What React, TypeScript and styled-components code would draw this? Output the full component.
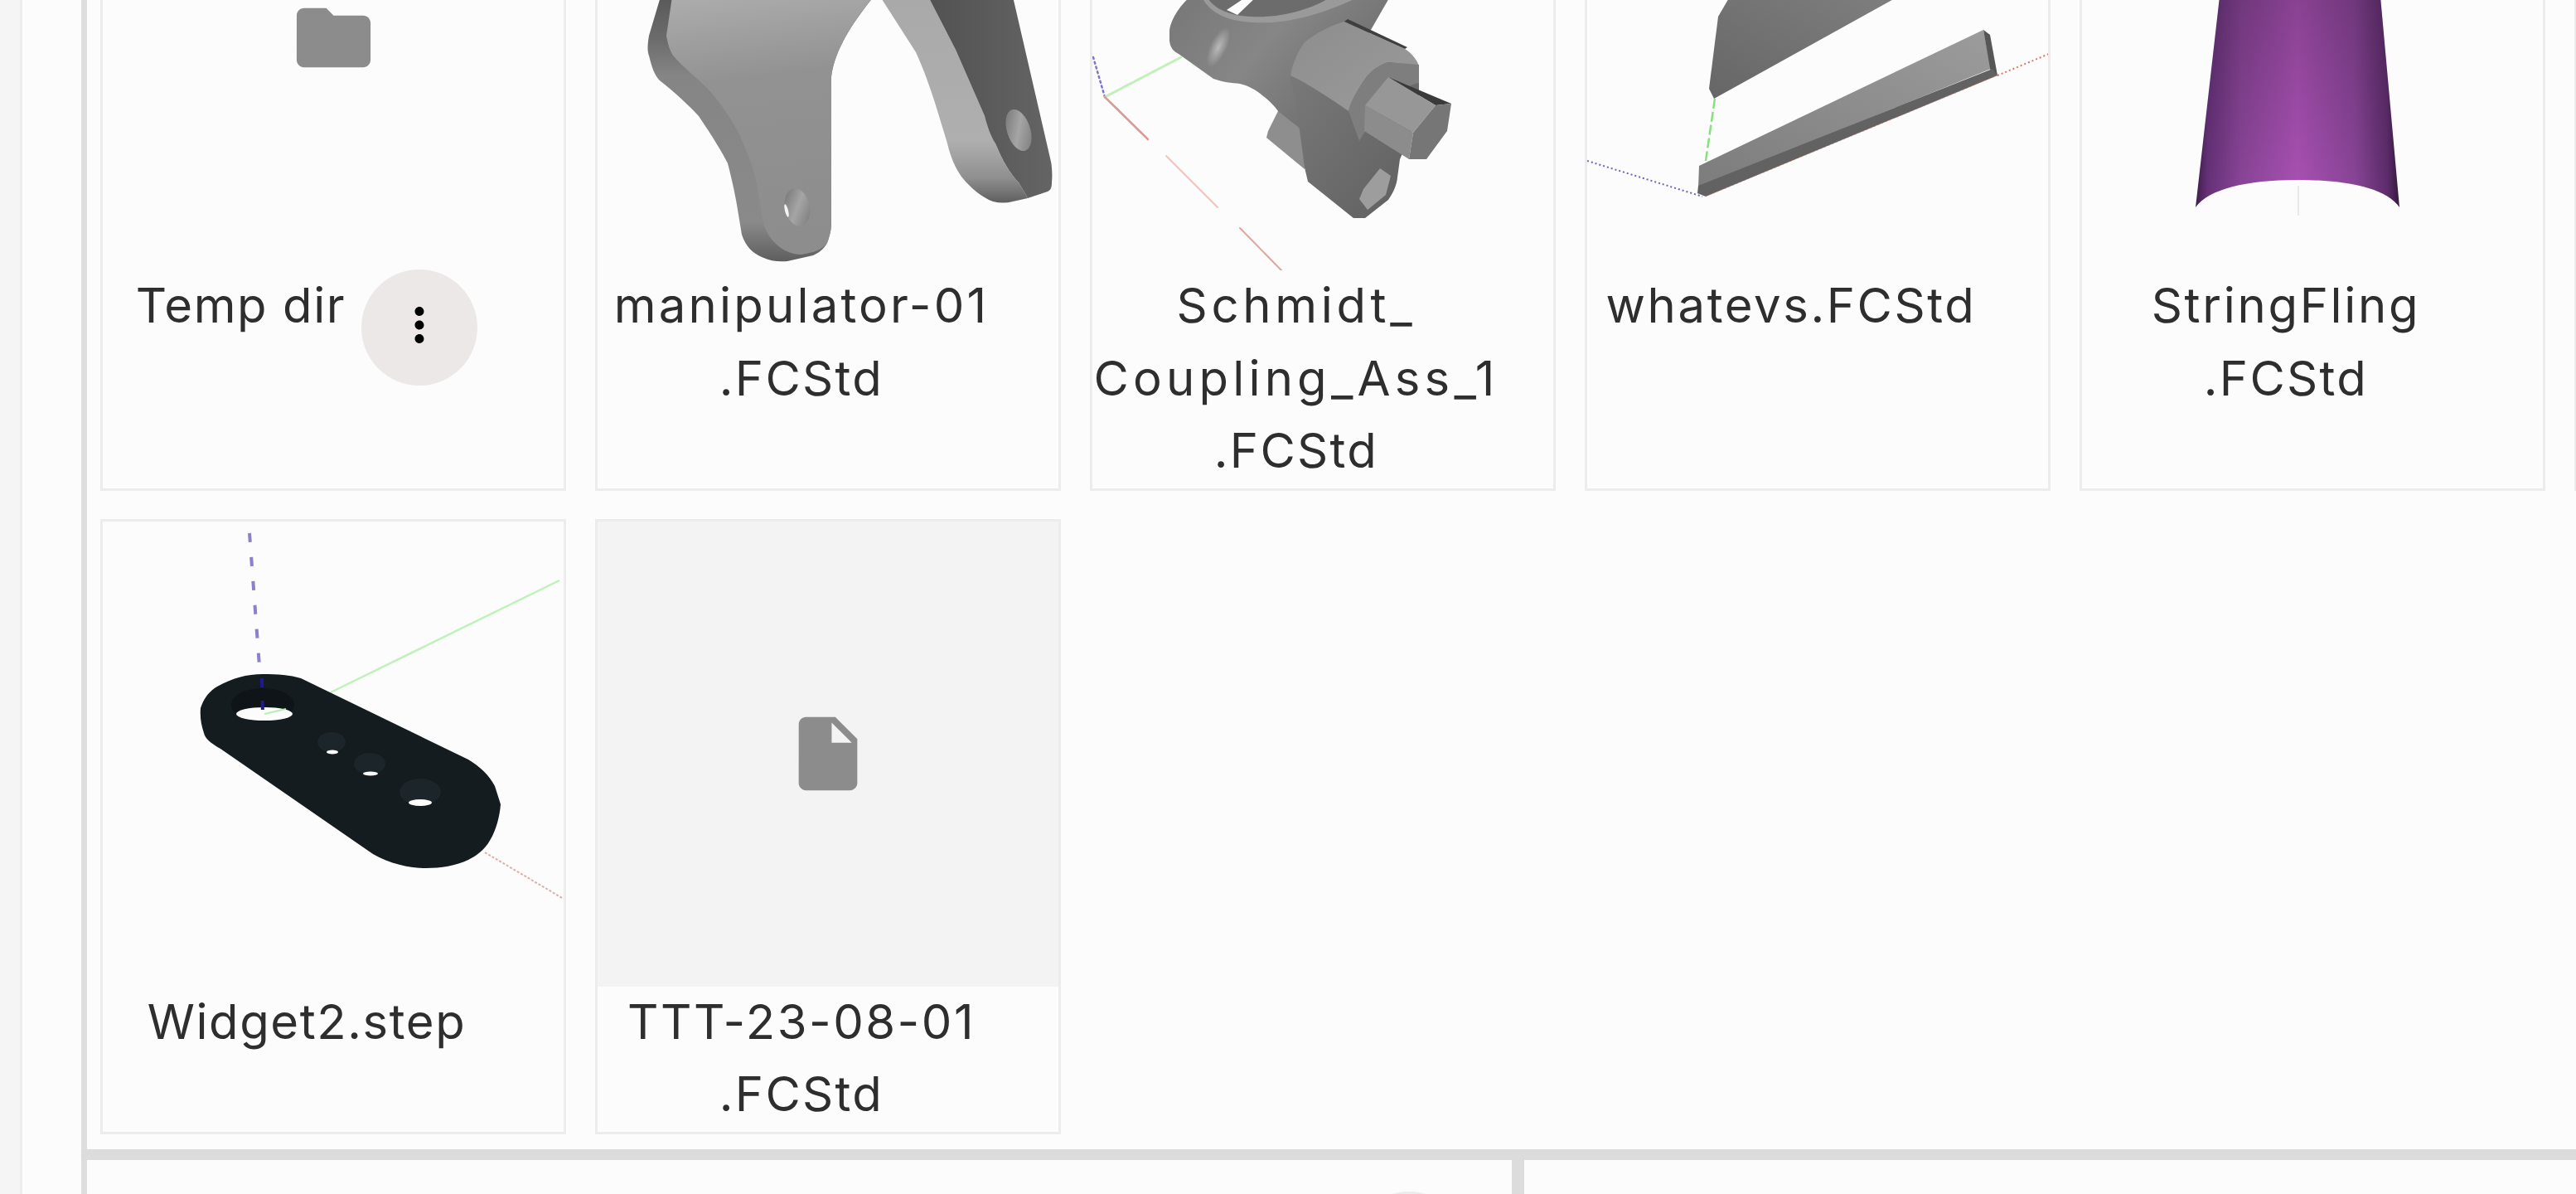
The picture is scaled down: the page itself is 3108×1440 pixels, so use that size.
import React from 'react'
import styled, { createGlobalStyle } from 'styled-components'
import { MdFolder, MdInsertDriveFile, MdMoreVert } from 'react-icons/md'

const GlobalStyle = createGlobalStyle`
  html, body {
    margin: 0;
    padding: 0;
    background: #fcfcfc;
    font-family: Inter, "Noto Sans", sans-serif;
  }
`

const Page = styled.div`
  display: flex;
  width: 3108px;
  height: 1440px;
  overflow: hidden;
  background: #fcfcfc;
`

const EdgeRail = styled.div`
  flex: 0 0 24px;
  background: #f5f5f5;
  border-right: 3px solid #ececec;
`

const SideColumn = styled.div`
  flex: 0 0 71px;
  border-right: 7px solid #dedede;
`

const MainColumn = styled.div`
  flex: 1;
  min-width: 0;
  display: flex;
  flex-direction: column;
`

const BrowserPanel = styled.div`
  flex: 1;
  min-height: 0;
  overflow: hidden;
  padding-left: 16px;
`

const CardGrid = styled.div`
  display: grid;
  grid-template-columns: repeat(6, 562px);
  column-gap: 35px;
  row-gap: 34px;
  margin-top: -238px;
`

const Card = styled.div`
  box-sizing: border-box;
  border: 3px solid #ececec;
  background: #fcfcfc;
`

const Thumb = styled.div<{ $placeholder?: boolean }>`
  height: 561px;
  display: flex;
  align-items: center;
  justify-content: center;
  color: #8c8c8c;
  background: ${p => (p.$placeholder ? '#f3f3f3' : 'transparent')};
  svg {
    display: block;
  }
`

const RenderSvg = styled.svg`
  filter: blur(0.7px);
`

const LabelRow = styled.div`
  display: flex;
  justify-content: center;
  align-items: flex-start;
  gap: 19px;
  padding: 0 64px 1px 0;
  margin-top: -1px;
`

const Label = styled.div`
  color: #2e2e2e;
  font-size: 58px;
  line-height: 87.5px;
  text-align: center;
`

const LabelLine = styled.span<{ $tracking: number }>`
  display: block;
  white-space: nowrap;
  letter-spacing: ${p => p.$tracking}px;
`

const MenuButton = styled.div`
  flex: 0 0 140px;
  height: 140px;
  box-sizing: border-box;
  padding-bottom: 6px;
  border-radius: 50%;
  background: #ece8e8;
  color: #000;
  display: flex;
  align-items: center;
  justify-content: center;
`

const HorizontalDivider = styled.div`
  flex: 0 0 13px;
  margin-left: -7px;
  background: #dcdcdc;
`

const BottomRow = styled.div`
  flex: 0 0 41px;
  display: flex;
  overflow: hidden;
`

const BottomLeft = styled.div`
  flex: 0 0 1734px;
  display: flex;
  justify-content: flex-end;
  padding: 38px 54px 0 0;
  box-sizing: border-box;
  border-right: 15px solid #dcdcdc;
`

const RoundAction = styled.div`
  flex: 0 0 140px;
  height: 140px;
  border-radius: 50%;
  background: #ececec;
`

const BottomRight = styled.div`
  flex: 1;
`

/* the renders below use screen coordinates as viewBox, per card */
const Render = ({ x, y, children }: { x: number; y: number; children: React.ReactNode }) => (
  <RenderSvg width="556" height="561" viewBox={`${x + 3} ${y + 3} 556 561`}>
    {children}
  </RenderSvg>
)

const ManipulatorRender = () => (
  <Render x={718} y={-238}>
    <defs>
      <linearGradient id="manFace" x1="0" y1="0" x2="0.1" y2="1">
        <stop offset="0" stopColor="#adadad" />
        <stop offset="0.35" stopColor="#929292" />
        <stop offset="1" stopColor="#8d8d8d" />
      </linearGradient>
      <linearGradient id="manEdge" x1="0" y1="0" x2="0" y2="1">
        <stop offset="0" stopColor="#595959" />
        <stop offset="0.16" stopColor="#6c6c6c" />
        <stop offset="0.3" stopColor="#858585" />
        <stop offset="0.85" stopColor="#8a8a8a" />
        <stop offset="1" stopColor="#5e5e5e" />
      </linearGradient>
      <linearGradient id="manLight" x1="0" y1="0" x2="0" y2="1">
        <stop offset="0" stopColor="#a9a9a9" />
        <stop offset="0.7" stopColor="#afafaf" />
        <stop offset="0.88" stopColor="#8f8f8f" />
        <stop offset="1" stopColor="#5f5f5f" />
      </linearGradient>
      <linearGradient id="manDark" x1="0" y1="0" x2="1" y2="0">
        <stop offset="0" stopColor="#525252" />
        <stop offset="1" stopColor="#646464" />
      </linearGradient>
      <linearGradient id="holeShade" x1="0" y1="0" x2="1" y2="1">
        <stop offset="0" stopColor="#6f6f6f" />
        <stop offset="0.5" stopColor="#a5a5a5" />
        <stop offset="1" stopColor="#777" />
      </linearGradient>
    </defs>
    <path
      d="M797 -4 L783 43 C781 55 781 62 783 67 C786 80 790 92 797 98 C815 112 832 128 843 140 C860 165 872 185 878 197 C884 220 888 240 890 253 L895 283 C900 298 908 305 919 310 C930 315 940 316 950 315 L981 308 C992 303 998 296 1000 287 C1003 278 1003 272 1003 267 L1003 93 C1006 62 1028 28 1054 -4 Z"
      fill="url(#manEdge)"
    />
    <path
      d="M811 -4 L804 43 C806 55 809 62 812 67 C825 82 842 95 854 107 C870 125 882 143 891 160 C900 180 908 200 912 217 L922 273 C928 288 938 297 947 302 C955 306 962 307 967 307 L981 304 C992 300 998 296 1000 287 C1003 278 1003 272 1003 267 L1003 93 C1006 62 1028 28 1054 -4 Z"
      fill="url(#manFace)"
    />
    <ellipse cx="962" cy="250" rx="15" ry="23" transform="rotate(-12 962 250)" fill="url(#holeShade)" />
    <ellipse cx="949" cy="254" rx="2" ry="8" transform="rotate(-14 949 254)" fill="#f4f4f4" />
    <path
      d="M1062 -4 L1105 63 C1115 85 1122 105 1129 127 L1143 173 C1147 190 1153 203 1160 213 C1172 228 1185 238 1198 243 C1206 245 1214 245 1222 243 L1240 239 L1229 220 C1215 205 1208 190 1201 173 L1188 140 L1153 60 L1120 -4 Z"
      fill="url(#manLight)"
    />
    <path
      d="M1120 -4 L1153 60 L1188 140 C1192 155 1196 165 1201 173 C1210 195 1218 208 1229 220 L1240 239 L1264 231 C1268 229 1269 226 1269 220 C1270 210 1269 200 1268 195 L1222 -4 Z"
      fill="url(#manDark)"
    />
    <ellipse cx="1229" cy="157" rx="14" ry="26" transform="rotate(-18 1229 157)" fill="url(#holeShade)" />
  </Render>
)

const CouplingRender = () => (
  <Render x={1315} y={-238}>
    <defs>
      <linearGradient id="cplArm" x1="0" y1="0" x2="1" y2="0.6">
        <stop offset="0" stopColor="#777" />
        <stop offset="0.45" stopColor="#868686" />
        <stop offset="1" stopColor="#6a6a6a" />
      </linearGradient>
      <linearGradient id="cplBody" x1="0" y1="0" x2="1" y2="1">
        <stop offset="0" stopColor="#7b7b7b" />
        <stop offset="1" stopColor="#5f5f5f" />
      </linearGradient>
      <linearGradient id="cplHead" x1="0" y1="0" x2="1" y2="1">
        <stop offset="0" stopColor="#8d8d8d" />
        <stop offset="1" stopColor="#9b9b9b" />
      </linearGradient>
      <radialGradient id="cplShine">
        <stop offset="0" stopColor="#b9b9b9" />
        <stop offset="1" stopColor="#b9b9b9" stopOpacity="0" />
      </radialGradient>
    </defs>
    <g fill="none" strokeLinecap="round">
      <path d="M1319 69 L1333 117" stroke="#7d75c8" strokeWidth="2.5" strokeDasharray="2 4" />
      <path d="M1333 117 L1425 69" stroke="#c3efbb" strokeWidth="3" strokeDasharray="4 1" />
      <path d="M1333 117 L1385 168" stroke="#d69d94" strokeWidth="2.5" />
      <path d="M1407 188 L1469 250" stroke="#ecc5be" strokeWidth="2" />
      <path d="M1496 275 L1547 327" stroke="#dfa69e" strokeWidth="2" />
    </g>
    {/* rear lug */}
    <path d="M1542 134 L1530 158 L1528 166 L1574 204 L1580 140 Z" fill="#8e8e8e" />
    {/* arm and ring */}
    <path
      d="M1436 -4 C1420 10 1411 28 1411 38 L1411 49 C1412 58 1416 62 1422 65 L1464 95 C1475 99 1486 100 1496 101 C1508 104 1516 109 1523 115 C1532 122 1538 128 1542 134 L1600 180 L1640 60 L1654 36 L1677 -4 Z"
      fill="url(#cplArm)"
    />
    <ellipse cx="1470" cy="57" rx="10" ry="26" transform="rotate(25 1470 57)" fill="url(#cplShine)" />
    <path d="M1450 -4 C1458 14 1478 25 1510 27 C1550 30 1595 18 1640 -4 Z" fill="#9a9a9a" />
    <path d="M1456 -4 C1464 10 1482 19 1510 20 C1548 22 1585 10 1606 -4 Z" fill="#6c6c6c" />
    <path d="M1480 12 L1504 -4 L1516 -4 L1493 18 Z" fill="#fcfcfc" />
    {/* lower body */}
    <path
      d="M1556 90 C1560 110 1566 130 1567 150 L1574 202 L1578 219 L1633 263 L1647 263 L1675 241 C1681 232 1685 224 1686 214 L1689 192 L1712 140 L1712 85 L1640 60 Z"
      fill="url(#cplBody)"
    />
    {/* boss */}
    <path
      d="M1557 91 C1560 75 1566 62 1574 51 C1588 40 1604 31 1622 26 L1695 59 C1703 64 1710 72 1712 80 L1675 75 C1660 80 1652 88 1647 95 C1638 108 1630 122 1627 134 C1604 118 1580 102 1557 91 Z"
      fill="url(#cplHead)"
    />
    <path d="M1622 26 L1695 59 L1698 57 L1626 23 Z" fill="#3f3f3f" />
    <path d="M1627 134 C1630 122 1638 108 1647 95 C1655 85 1664 78 1675 75 L1712 78 L1712 100 C1690 105 1665 125 1655 145 L1640 170 Z" fill="#7e7e7e" />
    {/* hex shaft */}
    <path d="M1675 93 L1751 125 L1732 127 Z" fill="#3a3a3a" />
    <path d="M1647 127 L1675 93 L1732 127 L1705 160 Z" fill="#979797" />
    <path d="M1647 127 L1705 160 L1700 192 L1646 158 Z" fill="#8c8c8c" />
    <path d="M1732 127 L1751 125 L1746 158 L1721 192 L1700 192 L1705 160 Z" fill="#767676" />
    {/* hex socket */}
    <path d="M1640 240 L1645 228 L1665 203 L1678 212 L1672 235 L1650 253 Z" fill="#9d9d9d" />
  </Render>
)

const WhatevsRender = () => (
  <Render x={1912} y={-238}>
    <defs>
      <linearGradient id="wSlabTop" x1="0" y1="1" x2="1" y2="0">
        <stop offset="0" stopColor="#666" />
        <stop offset="1" stopColor="#7f7f7f" />
      </linearGradient>
      <linearGradient id="wSlabLow" x1="0" y1="1" x2="1" y2="0">
        <stop offset="0" stopColor="#7c7c7c" />
        <stop offset="1" stopColor="#9c9c9c" />
      </linearGradient>
    </defs>
    <path d="M2069 119 L2058 194" fill="none" stroke="#86e07f" strokeWidth="2.5" strokeDasharray="12 4" />
    <path d="M2086 -4 L2086 6" fill="none" stroke="#86e07f" strokeWidth="2.5" />
    <path d="M1915 194 L2054 237" fill="none" stroke="#6d63bb" strokeWidth="2" strokeDasharray="2 3" />
    <path d="M2410 91 L2472 65" fill="none" stroke="#d8776a" strokeWidth="2" strokeDasharray="2 3" />
    <path d="M2087 -4 L2073 20 L2062 107 L2068 119 L2290 -4 Z" fill="url(#wSlabTop)" />
    <path d="M2050 200 L2393 36 L2402 83 L2049 226 Z" fill="url(#wSlabLow)" />
    <path d="M2393 36 L2401 42 L2410 91 L2402 88 Z" fill="#565656" />
    <path d="M2049 224 L2404 83 L2410 91 L2058 237 L2048 233 Z" fill="#626262" />
    <path d="M2058 237 L2410 91" fill="none" stroke="#d8776a" strokeWidth="1" strokeDasharray="2 3" opacity="0.7" />
  </Render>
)

const StringFlingRender = () => (
  <Render x={2509} y={-238}>
    <defs>
      <linearGradient id="sfWall" x1="0" y1="0" x2="1" y2="0">
        <stop offset="0" stopColor="#3f1d4a" />
        <stop offset="0.06" stopColor="#67327a" />
        <stop offset="0.22" stopColor="#8b4599" />
        <stop offset="0.5" stopColor="#ab52b6" />
        <stop offset="0.78" stopColor="#8b4599" />
        <stop offset="0.94" stopColor="#5e2d6d" />
        <stop offset="1" stopColor="#341840" />
      </linearGradient>
      <linearGradient id="sfFade" x1="0" y1="0" x2="0" y2="1">
        <stop offset="0" stopColor="#000" stopOpacity="0.2" />
        <stop offset="1" stopColor="#000" stopOpacity="0" />
      </linearGradient>
    </defs>
    <path d="M2678 -4 L2649 250 C2665 228 2710 217 2772 217 C2835 217 2880 228 2895 250 L2872 -4 Z" fill="url(#sfWall)" />
    <path d="M2678 -4 L2649 250 C2665 228 2710 217 2772 217 C2835 217 2880 228 2895 250 L2872 -4 Z" fill="url(#sfFade)" />
    <path d="M2773 224 L2773 260" stroke="#e8e8e8" strokeWidth="2" fill="none" />
  </Render>
)

const WidgetRender = () => (
  <Render x={121} y={626}>
    <g fill="none">
      <path d="M301 643 L317 857" stroke="#8a80cc" strokeWidth="4" strokeDasharray="11 18" />
      <path d="M399 835 L675 700" stroke="#bdf2b8" strokeWidth="2.5" />
      <path d="M585 1028 L680 1084" stroke="#dcb0a8" strokeWidth="2" strokeDasharray="3 2" />
    </g>
    <path
      d="M242 854 C246 842 252 834 262 828 C280 818 298 813 317 813 C335 813 350 814 363 818 L565 916 C580 925 590 935 597 948 L604 970 C603 985 598 1002 592 1012 C585 1025 575 1032 565 1037 C550 1044 532 1047 514 1047 C495 1047 470 1042 450 1030 L266 903 C256 897 248 892 246 884 C243 875 241 865 242 854 Z"
      fill="#151c20"
    />
    <ellipse cx="317" cy="850" rx="38" ry="20" fill="#0e1417" />
    <ellipse cx="319" cy="861" rx="34" ry="8" fill="#fcfcfc" />
    <path d="M319 861 L345 855" stroke="#b5f0b0" strokeWidth="2" fill="none" />
    <path d="M316 818 L317 862" stroke="#1f1a90" strokeWidth="4" strokeDasharray="11 16" fill="none" />
    <ellipse cx="400" cy="895" rx="17" ry="12" fill="#1c2529" />
    <ellipse cx="401" cy="907" rx="7" ry="2.5" fill="#fcfcfc" />
    <ellipse cx="446" cy="921" rx="19" ry="13" fill="#1c2529" />
    <ellipse cx="447" cy="933" rx="9" ry="2.5" fill="#fcfcfc" />
    <ellipse cx="507" cy="955" rx="25" ry="16" fill="#1c2529" />
    <ellipse cx="507" cy="968" rx="14" ry="4" fill="#fcfcfc" />
  </Render>
)

type Item = {
  lines: [string, number][]
  render?: React.ReactNode
  icon?: 'folder' | 'file'
  menu?: boolean
}

// the second value of a line is its letter spacing
const items: Item[] = [
  { lines: [['Temp dir', 1.6]], icon: 'folder', menu: true },
  { lines: [['manipulator-01', 3.2], ['.FCStd', 2.3]], render: <ManipulatorRender /> },
  { lines: [['Schmidt_', 4.7], ['Coupling_Ass_1', 5.2], ['.FCStd', 2.3]], render: <CouplingRender /> },
  { lines: [['whatevs.FCStd', 2.6]], render: <WhatevsRender /> },
  { lines: [['StringFling', 2.7], ['.FCStd', 2.3]], render: <StringFlingRender /> },
  { lines: [] },
  { lines: [['Widget2.step', 1.6]], render: <WidgetRender /> },
  { lines: [['TTT-23-08-01', 2.5], ['.FCStd', 2.3]], icon: 'file' },
]

const App = () => {
  return (
    <Page>
      <GlobalStyle />
      <EdgeRail />
      <SideColumn />
      <MainColumn>
        <BrowserPanel>
          <CardGrid>
            {items.map((item, i) => (
              <Card key={i}>
                <Thumb $placeholder={item.icon === 'file'}>
                  {item.render}
                  {item.icon === 'folder' && <MdFolder size={107} />}
                  {item.icon === 'file' && <MdInsertDriveFile size={106} />}
                </Thumb>
                <LabelRow>
                  <Label>
                    {item.lines.map(([text, tracking]) => (
                      <LabelLine key={text} $tracking={tracking}>{text}</LabelLine>
                    ))}
                  </Label>
                  {item.menu && (
                    <MenuButton>
                      <MdMoreVert size={66} />
                    </MenuButton>
                  )}
                </LabelRow>
              </Card>
            ))}
          </CardGrid>
        </BrowserPanel>
        <HorizontalDivider />
        <BottomRow>
          <BottomLeft>
            <RoundAction />
          </BottomLeft>
          <BottomRight />
        </BottomRow>
      </MainColumn>
    </Page>
  )
}

export default App
